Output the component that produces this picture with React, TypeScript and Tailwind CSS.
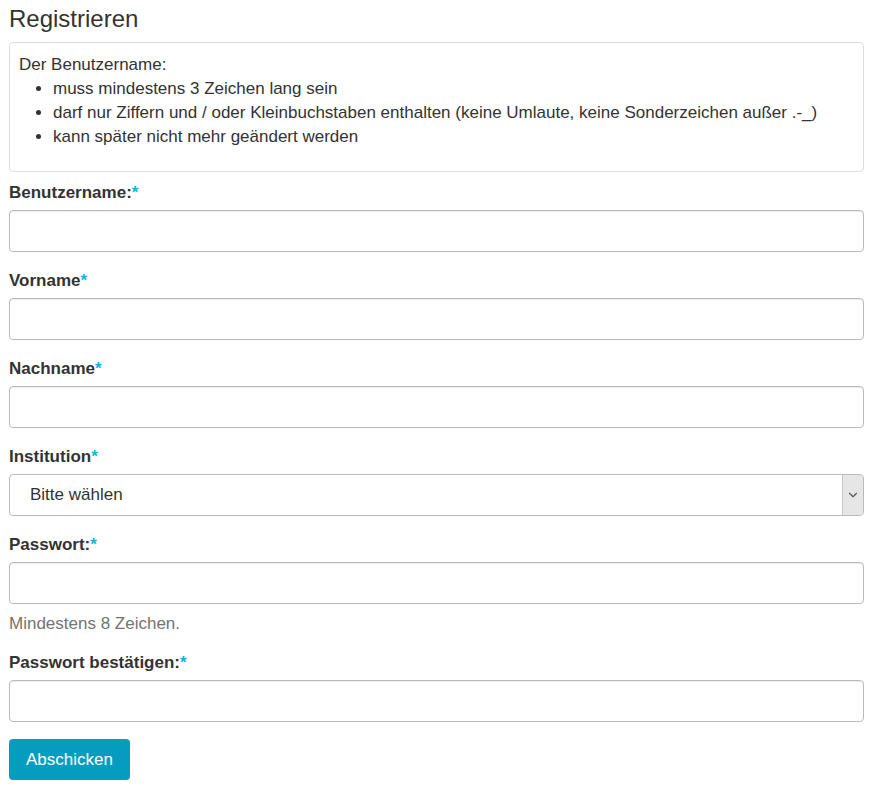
import { ChevronDown } from 'lucide-react';

const font = { fontFamily: '"Liberation Sans", Arial, sans-serif' };

function Label({ text }: { text: string }) {
    return (
        <label className="block h-6 leading-6 mb-[5px] text-[17px] font-bold text-[#333]">
            {text}
            <span className="text-[#17b0da]">*</span>
        </label>
    );
}

function TextInput({ type = 'text' }: { type?: string }) {
    return (
        <input
            type={type}
            className="block w-full h-[42px] px-3 bg-white border border-[#bbb] rounded-[4px] shadow-[inset_0_1px_1px_rgba(0,0,0,0.075)] text-[17px] text-[#555] focus:outline-none"
        />
    );
}

export default function App() {
    return (
        <div className="min-h-screen bg-white text-[#333] pl-[9px] pr-[15px]" style={font}>
            <h2 className="text-[24px] leading-[26px] pt-[6px] mb-[10px] text-[#333]">Registrieren</h2>

            {/* Hinweise zum Benutzernamen */}
            <div className="border border-[#ddd] rounded-[4px] px-[9px] pt-[10px] pb-[22px] text-[17px] leading-6 text-[#333]">
                <p>Der Benutzername:</p>
                <ul className="list-disc pl-[34px]">
                    <li>muss mindestens 3 Zeichen lang sein</li>
                    <li>darf nur Ziffern und / oder Kleinbuchstaben enthalten (keine Umlaute, keine Sonderzeichen außer .-_)</li>
                    <li>kann später nicht mehr geändert werden</li>
                </ul>
            </div>

            <form className="pt-[9px]">
                <div className="mb-[17px]">
                    <Label text="Benutzername:" />
                    <TextInput />
                </div>
                <div className="mb-[17px]">
                    <Label text="Vorname" />
                    <TextInput />
                </div>
                <div className="mb-[17px]">
                    <Label text="Nachname" />
                    <TextInput />
                </div>
                <div className="mb-[17px]">
                    <Label text="Institution" />
                    <div className="flex w-full h-[42px] bg-white border border-[#bbb] rounded-[4px] overflow-hidden">
                        <div className="flex-1 flex items-center pl-5 text-[17px] text-[#333]">Bitte wählen</div>
                        <div className="w-[21px] flex items-center justify-center bg-[#e6e6e6] border-l border-[#c8c8c8]">
                            <ChevronDown className="w-[14px] h-[14px] text-[#555]" strokeWidth={2} />
                        </div>
                    </div>
                </div>
                <div className="mb-[16px]">
                    <Label text="Passwort:" />
                    <TextInput type="password" />
                    <p className="mt-[9px] leading-[22px] text-[17px] text-[#737373]">Mindestens 8 Zeichen.</p>
                </div>
                <div className="mb-[16px]">
                    <Label text="Passwort bestätigen:" />
                    <TextInput type="password" />
                </div>
                <button
                    type="submit"
                    className="h-[41px] mt-px px-[17px] bg-[#069cbf] text-white text-[17px] rounded-[4px]"
                >
                    Abschicken
                </button>
            </form>
        </div>
    );
}
